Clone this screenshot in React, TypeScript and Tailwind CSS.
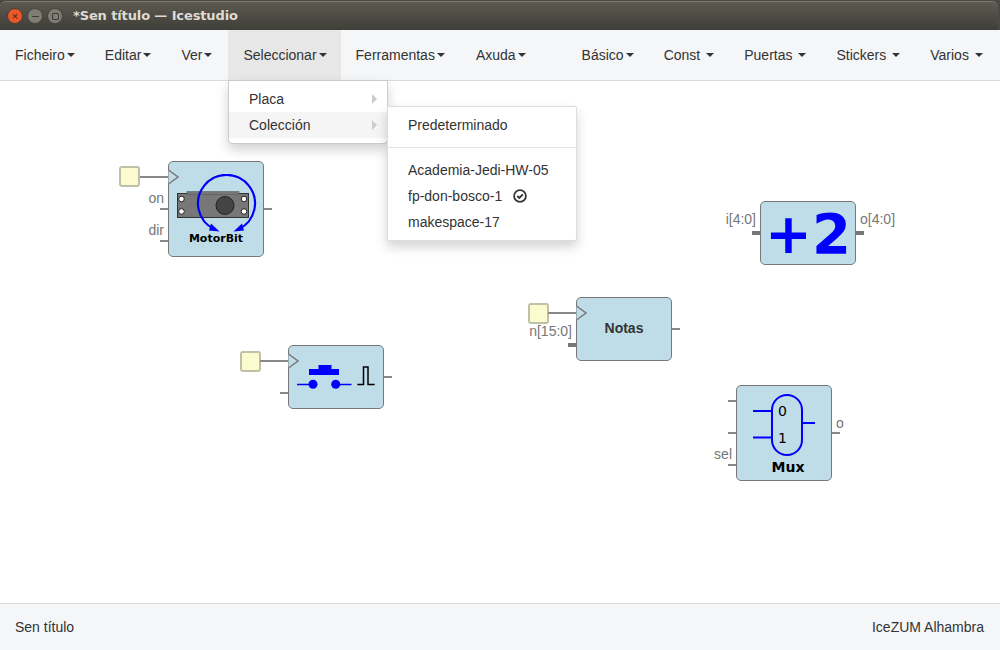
const sans = "font-['Liberation_Sans',Arial,sans-serif]";
const dejavu = "font-['DejaVu_Sans',sans-serif]";

function NavItem({ label, spaced, active, extra, tight }: { label: string; spaced?: boolean; active?: boolean; extra?: boolean; tight?: boolean }) {
  return (
    <div className={`flex h-full items-center pl-[15px] ${extra ? "pr-[16px]" : tight ? "pr-[14px]" : "pr-[15px]"} ${active ? "bg-[#e7e7e7]" : ""}`}>
      <span>{label}</span>
      <span
        className={`${spaced ? "ml-[6px]" : "ml-[2px]"} h-0 w-0 border-x-[4px] border-t-[4px] border-x-transparent border-t-[#333]`}
      />
    </div>
  );
}

function Block({ x, y, h, children }: { x: number; y: number; h: number; children?: React.ReactNode }) {
  return (
    <div
      className="absolute box-border flex w-[96px] items-center justify-center rounded-[5px] border border-[#777] bg-[#bfdde9]"
      style={{ left: x, top: y, height: h }}
    >
      {children}
    </div>
  );
}

function InputSquare({ x, y }: { x: number; y: number }) {
  return (
    <div
      className="absolute box-border h-[21px] w-[21px] rounded-[3px] border-2 border-[#c0c0aa] bg-[#fcfbd0]"
      style={{ left: x, top: y }}
    />
  );
}

function PortLabel({ x, y, text, right }: { x: number; y: number; text: string; right?: boolean }) {
  return (
    <span
      className="absolute text-[14px] leading-[16px] text-[#777]"
      style={right ? { right: 1000 - x, top: y - 80 } : { left: x, top: y - 80 }}
    >
      {text}
    </span>
  );
}

function Wires() {
  const thin = [
    [140, 177, 168, 177], [264, 209, 272, 209], [160, 209, 168, 209], [160, 241, 168, 241],
    [260, 361, 288, 361], [384, 377, 392, 377], [280, 393, 288, 393],
    [548, 313, 576, 313], [672, 329, 680, 329],
    [728, 401, 736, 401], [728, 433, 736, 433], [728, 465, 736, 465], [832, 433, 840, 433],
  ];
  const thick = [
    [752, 233, 760, 233], [856, 233, 864, 233], [568, 345, 576, 345],
  ];
  const clocks = [[168, 177], [288, 361], [576, 313]];
  return (
    <svg className="absolute left-0 top-0" width="1000" height="523" viewBox="0 80 1000 523">
      {thin.map(([a, b, c, d], i) => (
        <line key={i} x1={a} y1={b} x2={c} y2={d} stroke="#888" strokeWidth="2" />
      ))}
      {thick.map(([a, b, c, d], i) => (
        <line key={i} x1={a} y1={b} x2={c} y2={d} stroke="#777" strokeWidth="4" />
      ))}
      {clocks.map(([x, y], i) => (
        <path key={i} d={`M${x + 0.5} ${y - 7}L${x + 10} ${y}L${x + 0.5} ${y + 7}`} fill="#bfdde9" stroke="#777" strokeWidth="1.5" />
      ))}
    </svg>
  );
}

function MotorIcon() {
  return (
    <svg className="absolute left-[7px] top-[12px]" width="84" height="64" viewBox="0 0 84 64">
      <rect x="1.5" y="19.5" width="71" height="24" fill="#777" stroke="#333" />
      <rect x="11" y="17.5" width="52" height="3" fill="#777" stroke="#555" strokeWidth="0.5" />
      <circle cx="49" cy="31.5" r="9" fill="#444" stroke="#222" />
      {[[5.5, 25], [5.5, 37.5], [68, 25], [68, 37.5]].map(([x, y], i) => (
        <circle key={i} cx={x} cy={y} r="2.8" fill="#fff" stroke="#222" />
      ))}
      <path d="M38 55A28.5 28.5 0 1 1 63 55" fill="none" stroke="#0000ff" strokeWidth="2.2" />
      <path d="M43.5 57.5L35 49.5L33 56.5Z M57.5 57.5L66 49.5L68 56.5Z" fill="#0000ff" />
    </svg>
  );
}

function PushIcon() {
  return (
    <svg width="94" height="62" viewBox="0 0 94 62" className="absolute left-0 top-0">
      <rect x="29.5" y="19" width="13" height="4" fill="#0000ff" />
      <rect x="20" y="23" width="30" height="6" fill="#0000ff" />
      <circle cx="24" cy="38.3" r="4.5" fill="#0000ff" />
      <circle cx="46.7" cy="38.3" r="4.5" fill="#0000ff" />
      <path d="M8 38.5H24M47 38.5H62.5" stroke="#0000ff" strokeWidth="1.5" fill="none" />
      <path d="M68.3 38.5H74.5V21H79V38.5H85.7" stroke="#000" strokeWidth="1.5" fill="none" />
    </svg>
  );
}

function MuxIcon() {
  return (
    <svg width="94" height="94" viewBox="0 0 94 94" className="absolute left-0 top-0">
      <rect x="35" y="9" width="30" height="60" rx="15" fill="none" stroke="#0000ff" strokeWidth="2" />
      <path d="M16 25H35M16 51.5H35M65 37H78" stroke="#0000ff" strokeWidth="2" fill="none" />
    </svg>
  );
}

function CheckIcon() {
  return (
    <svg width="14" height="14" viewBox="0 0 14 14" className="ml-[11px]">
      <circle cx="7" cy="7" r="5.9" fill="none" stroke="#333" strokeWidth="1.8" />
      <path d="M4.3 7L6.3 9L9.9 5.3" fill="none" stroke="#333" strokeWidth="1.9" />
    </svg>
  );
}

export default function App() {
  return (
    <div className={`${sans} relative flex h-[650px] w-[1000px] flex-col overflow-hidden bg-white text-[14px] text-[#333]`}>
      <div className="h-[30px] shrink-0 bg-[#4a4944] pr-[2px] pt-[1px]">
        <div className="flex h-[29px] items-center rounded-t-[6px] border-t border-[#7d7c70] bg-gradient-to-b from-[#5c5a50] to-[#3f3e38] pl-[7px]">
          <div className="flex items-center gap-[4px]">
            <div className="flex h-[16px] w-[16px] items-center justify-center rounded-full border border-[#4c3a30] bg-[#e8582a] text-[11px] leading-none text-[#4a1d0c]">×</div>
            <div className="flex h-[16px] w-[16px] items-center justify-center rounded-full border border-[#45443e] bg-[#807d75]">
              <div className="h-px w-[7px] bg-[#3c3b37]" />
            </div>
            <div className="flex h-[16px] w-[16px] items-center justify-center rounded-full border border-[#45443e] bg-[#807d75]">
              <div className="h-[7px] w-[7px] rounded-[1px] border border-[#3c3b37]" />
            </div>
          </div>
          <span className={`${dejavu} ml-[10px] text-[13px] font-bold tracking-[-0.12px] text-[#dfdbd2]`}>*Sen título — Icestudio</span>
        </div>
      </div>

      <div className="flex h-[51px] shrink-0 items-stretch border-b border-[#d8dcdf] bg-[#f5f6f8]">
        <NavItem label="Ficheiro" />
        <NavItem label="Editar" />
        <NavItem label="Ver" extra />
        <NavItem label="Seleccionar" active tight />
        <NavItem label="Ferramentas" extra />
        <NavItem label="Axuda" />
        <div className="w-[26px]" />
        <NavItem label="Básico" />
        <NavItem label="Const" spaced />
        <NavItem label="Puertas" spaced />
        <NavItem label="Stickers" spaced />
        <NavItem label="Varios" spaced />
      </div>

      <div className="relative -mt-px flex-1">
        <InputSquare x={119} y={86} />
        <Block x={168} y={81} h={96}>
          <MotorIcon />
          <span className={`${dejavu} absolute left-0 top-[71px] w-full text-center text-[11px] font-bold leading-[12px] text-black`}>MotorBit</span>
        </Block>
        <PortLabel x={164} y={190} text="on" right />
        <PortLabel x={164} y={222} text="dir" right />

        <InputSquare x={240} y={271} />
        <Block x={288} y={265} h={64}>
          <PushIcon />
        </Block>

        <InputSquare x={528} y={223} />
        <Block x={576} y={217} h={64}>
          <span className="relative -top-px text-[14px] font-bold text-[#333]">Notas</span>
        </Block>
        <PortLabel x={572} y={323} text="n[15:0]" right />

        <Block x={760} y={121} h={64}>
          <span className={`${dejavu} relative top-px text-[56px] font-bold leading-none text-[#0000ff]`}>+2</span>
        </Block>
        <PortLabel x={756} y={211} text="i[4:0]" right />
        <PortLabel x={860} y={211} text="o[4:0]" />

        <Block x={736} y={305} h={96}>
          <MuxIcon />
          <span className={`${dejavu} absolute left-[41px] top-[17px] text-[14px] leading-[16px] text-black`}>0</span>
          <span className={`${dejavu} absolute left-[41px] top-[44px] text-[14px] leading-[16px] text-black`}>1</span>
          <span className={`${dejavu} absolute left-[4px] top-[74px] w-full text-center text-[14px] font-bold leading-[15px] text-black`}>Mux</span>
        </Block>
        <PortLabel x={732} y={446} text="sel" right />
        <PortLabel x={836} y={415} text="o" />

        <Wires />

        <div className="absolute left-[228px] top-0 box-border h-[64px] w-[160px] rounded-b-[4px] border border-[#ccc] bg-white py-[5px] shadow-[0_6px_12px_rgba(0,0,0,0.175)]">
          <div className="flex h-[26px] items-center justify-between pl-[20px] pr-[10px]">
            <span>Placa</span>
            <span className="h-0 w-0 border-y-[5px] border-l-[5px] border-y-transparent border-l-[#ccc]" />
          </div>
          <div className="flex h-[26px] items-center justify-between bg-[#f5f5f5] pl-[20px] pr-[10px]">
            <span>Colección</span>
            <span className="h-0 w-0 border-y-[5px] border-l-[5px] border-y-transparent border-l-[#ccc]" />
          </div>
        </div>

        <div className="absolute left-[387px] top-[26px] box-border h-[135px] w-[190px] rounded-r-[2px] border border-[#ddd] bg-white py-[5px] shadow-[0_6px_12px_rgba(0,0,0,0.175)]">
          <div className="flex h-[26px] items-center pl-[20px]">Predeterminado</div>
          <div className="my-[9px] h-px bg-[#e5e5e5]" />
          <div className="flex h-[26px] items-center pl-[20px]">Academia-Jedi-HW-05</div>
          <div className="flex h-[26px] items-center pl-[20px]">
            fp-don-bosco-1
            <CheckIcon />
          </div>
          <div className="flex h-[26px] items-center pl-[20px]">makespace-17</div>
        </div>
      </div>

      <div className="flex h-[47px] shrink-0 items-center justify-between border-t border-[#d8dcdf] bg-[#f5f6f8] pl-[15px] pr-[16px]">
        <span>Sen título</span>
        <span>IceZUM Alhambra</span>
      </div>
    </div>
  );
}
